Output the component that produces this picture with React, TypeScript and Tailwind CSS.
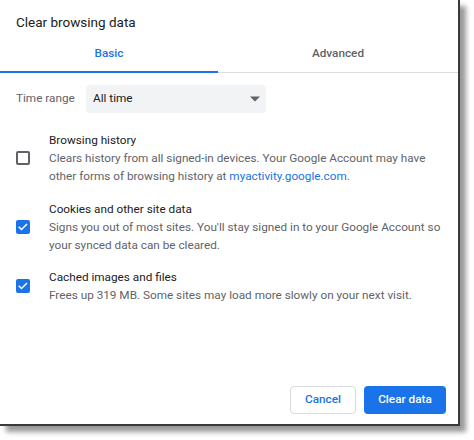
import React from "react";

function Check({ checked }: { checked: boolean }) {
  if (checked) {
    return (
      <div className="w-[14px] h-[14px] rounded-[2px] bg-[#1a73e8] flex items-center justify-center shrink-0">
        <svg width="12" height="12" viewBox="0 0 24 24">
          <path d="M4.5 12.5l4.5 4.5 10-10" fill="none" stroke="#fff" strokeWidth="3" strokeLinecap="square" />
        </svg>
      </div>
    );
  }
  return <div className="w-[14px] h-[14px] rounded-[2px] border-2 border-[#5f6368] shrink-0" />;
}

function Item({
  checked,
  title,
  children,
  className,
}: {
  checked: boolean;
  title: string;
  children: React.ReactNode;
  className?: string;
}) {
  return (
    <div className={"flex items-center " + (className ?? "")}>
      <div className="w-[49px] pl-[16px] flex">
        <Check checked={checked} />
      </div>
      <div className="flex flex-col text-[11.75px] leading-[18px] whitespace-nowrap">
        <div className="text-[#202124]">{title}</div>
        <div className="text-[#5f6368]">{children}</div>
      </div>
    </div>
  );
}

export default function App() {
  return (
    <div
      className="w-[474px] h-[440px] bg-white overflow-hidden"
      style={{ fontFamily: "Roboto, 'Liberation Sans', sans-serif" }}
    >
      <div className="w-[460px] h-[426px] bg-white border-r-2 border-b-2 border-[#3a3a3a] shadow-[6px_6px_5px_rgba(0,0,0,0.4)] flex flex-col">
        <div className="pt-[12px] pl-[16px] h-[36px] text-[13.5px] leading-[20px] text-[#202124]">
          Clear browsing data
        </div>
        <div className="flex h-[37px] text-[11.75px] font-medium">
          <div className="w-[218px] flex items-center justify-center border-b-2 border-[#1a73e8] text-[#1a73e8]">
            Basic
          </div>
          <div className="flex-1 flex items-center justify-center border-b border-[#dadce0] text-[#5f6368]">
            Advanced
          </div>
        </div>
        <div className="flex items-center mt-[12px] pl-[16px] text-[11.75px]">
          <div className="w-[70px] text-[#5f6368]">Time range</div>
          <div className="w-[180px] h-[28px] bg-[#f1f3f4] rounded-[4px] flex items-center justify-between pl-[7px] pr-[6px] text-[#202124]">
            <span>All time</span>
            <svg width="10" height="6" viewBox="0 0 10 5">
              <path d="M0 0h10L5 5z" fill="#5f6368" />
            </svg>
          </div>
        </div>
        <Item checked={false} title="Browsing history" className="mt-[18px]">
          <div>Clears history from all signed-in devices. Your Google Account may have</div>
          <div>
            other forms of browsing history at <span className="text-[#1a73e8]">myactivity.google.com.</span>
          </div>
        </Item>
        <Item checked={true} title="Cookies and other site data" className="mt-[15px]">
          <div>Signs you out of most sites. You'll stay signed in to your Google Account so</div>
          <div>your synced data can be cleared.</div>
        </Item>
        <Item checked={true} title="Cached images and files" className="mt-[14px]">
          <div>Frees up 319 MB. Some sites may load more slowly on your next visit.</div>
        </Item>
        <div className="mt-auto flex justify-end gap-[8px] pr-[12px] pb-[10px] text-[11.75px] font-medium">
          <button className="w-[66px] h-[28px] rounded-[4px] border border-[#dadce0] bg-white text-[#1a73e8]">
            Cancel
          </button>
          <button className="w-[82px] h-[28px] rounded-[4px] bg-[#1a73e8] text-white">Clear data</button>
        </div>
      </div>
    </div>
  );
}
